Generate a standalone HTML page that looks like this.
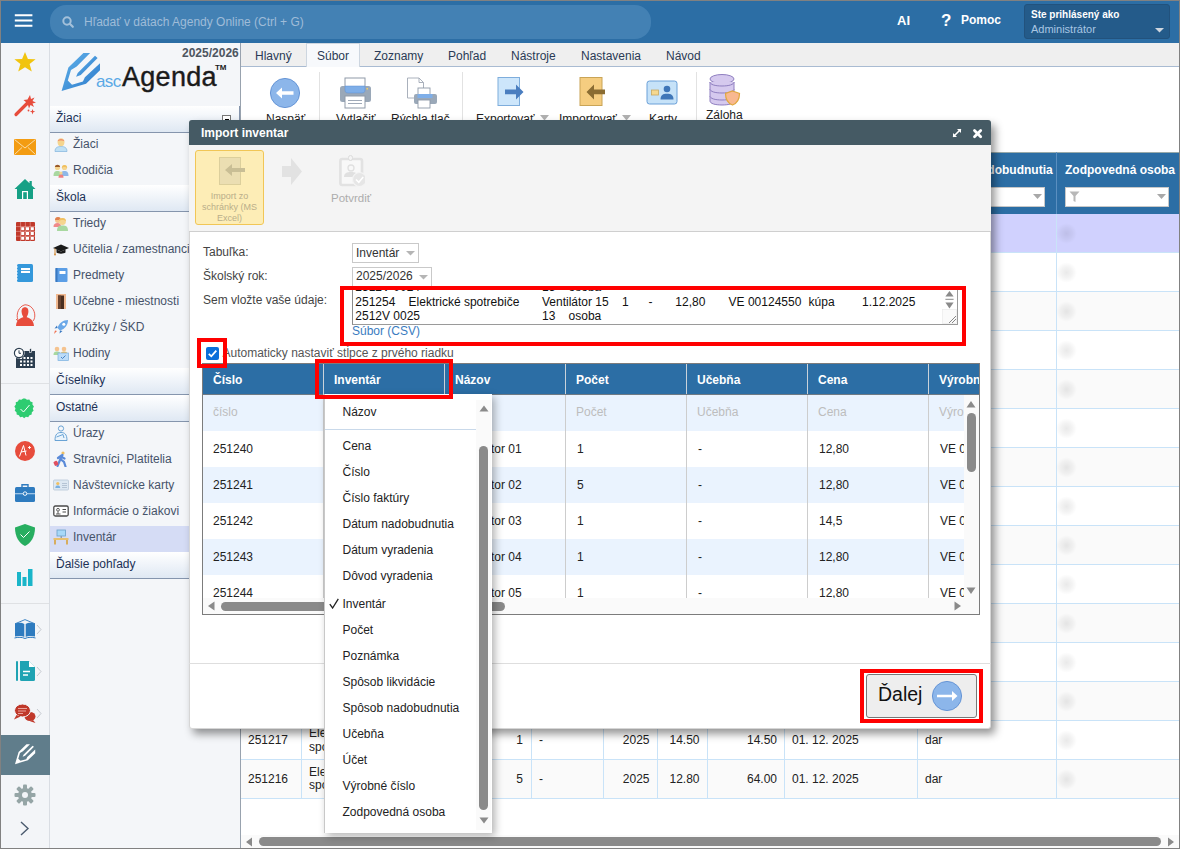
<!DOCTYPE html>
<html><head><meta charset="utf-8">
<style>
*{box-sizing:border-box;margin:0;padding:0}
html,body{width:1180px;height:849px;overflow:hidden;background:#fff}
body{font-family:"Liberation Sans",sans-serif;font-size:12px;position:relative;color:#222}
.a{position:absolute}
.t{position:absolute;white-space:nowrap;line-height:1}
#frame{position:absolute;left:0;top:0;width:1180px;height:849px;border:1px solid #818181;z-index:100;pointer-events:none}
/* header */
#hdr{left:1px;top:1px;width:1178px;height:42px;background:#2c6ea5}
#search{left:49px;top:4px;width:601px;height:34px;border-radius:16px;background:#4381b4}
/* left bar */
#lbar{left:1px;top:43px;width:49px;height:805px;background:#f3f5f8;border-right:1px solid #d9dde3}
/* sidebar */
#side{left:50px;top:43px;width:190px;height:805px;background:#f4f6f9}
.sh{position:absolute;left:0;width:190px;height:27px;background:linear-gradient(#ffffff,#dfe8f3);border-bottom:1px solid #8595ad;color:#1c3156}
.sh span{position:absolute;left:6px;top:6px;font-size:12px;line-height:12px}
.si{position:absolute;left:0;width:190px;height:26px;color:#46536a}
.si span{position:absolute;left:23px;top:5px;font-size:12px;line-height:12px;white-space:nowrap}
.si svg{position:absolute;left:3px;top:3px}
/* main */
#main{left:240px;top:43px;width:939px;height:805px;background:#fff;border-left:1px solid #b8bfc8}
#tabs{left:0;top:0;width:938px;height:24px;background:#efefef;border-bottom:1px solid #a9bbd2}
.tab{position:absolute;top:0;height:24px;color:#2a3b55;font-size:12px}
.tab span{position:absolute;top:7px;line-height:12px;white-space:nowrap}
</style></head><body>
<div id="frame"></div>

<!-- HEADER -->
<div id="hdr" class="a">
<svg class="a" style="left:0;top:0" width="40" height="40"><path d="M13.8 14.2H31.4M13.8 19.5H31.4M13.8 24.8H31.4" stroke="#fff" stroke-width="2"/></svg>
  <div id="search" class="a">
    <svg class="a" style="left:12px;top:11px" width="13" height="13" viewBox="0 0 13 13"><circle cx="5" cy="5" r="3.7" fill="none" stroke="#a3c0da" stroke-width="2"/><line x1="7.8" y1="7.8" x2="10.8" y2="10.8" stroke="#a3c0da" stroke-width="2.2" stroke-linecap="round"/></svg>
    <div class="t" style="left:34px;top:11px;color:#9fbcd8;font-size:12px">Hľadať v dátach Agendy Online (Ctrl + G)</div>
  </div>
  <div class="t" style="left:896px;top:13px;color:#fff;font-weight:bold;font-size:13px">AI</div>
  <div class="t" style="left:940px;top:11px;color:#fff;font-weight:bold;font-size:17px">?</div>
  <div class="t" style="left:960px;top:13px;color:#fff;font-weight:bold;font-size:12px">Pomoc</div>
  <div class="a" style="left:1023px;top:3px;width:146px;height:35px;background:#245b8a;border-radius:3px;border:1px solid #22527d"></div>
  <div class="t" style="left:1030px;top:9px;color:#fff;font-weight:bold;font-size:10px">Ste prihlásený ako</div>
  <div class="t" style="left:1030px;top:23px;color:#a9c6e3;font-size:11px">Administrátor</div>
  <svg class="a" style="left:1154px;top:27px" width="9" height="5"><path d="M0 0H9L4.5 4.5Z" fill="#cfd6de"/></svg>
</div>

<!-- LEFT BAR -->
<div id="lbar" class="a"></div>


<!-- LEFT BAR ICONS -->
<div class="a" style="left:1px;top:383px;width:48px;height:1px;background:#dfe1e4"></div>
<div class="a" style="left:1px;top:603px;width:48px;height:1px;background:#dfe1e4"></div>
<div class="a" style="left:1px;top:735px;width:49px;height:40px;background:#607d8b"></div>
<svg class="a" style="left:13px;top:50px" width="24" height="24" viewBox="0 0 24 24"><path d="M12 2 L14.9 9 L22.6 9.2 L16.6 14 L18.8 21.6 L12 17.3 L5.2 21.6 L7.4 14 L1.4 9.2 L9.1 9Z" fill="#f1c40f"/></svg>
<svg class="a" style="left:13px;top:93px" width="24" height="24" viewBox="0 0 24 24"><path d="M3 21.5 L14.5 10" stroke="#e74c3c" stroke-width="3.2" stroke-linecap="round"/><path d="M17 2 L18 6 L21.5 4.5 L19.5 8 L23 9.5 L19.5 10.5 L21 14 L17.5 12 L16 15.5 L15 12 L11.5 13 L13.5 9.5 L10.5 7 L14.5 6.5Z" fill="#e74c3c"/><path d="M19.5 16 L20.3 18 L22.3 18.5 L20.3 19.2 L19.5 21.5 L18.8 19.2 L16.8 18.5 L18.8 18Z" fill="#e74c3c"/><circle cx="15.5" cy="17.5" r="0.9" fill="#e74c3c"/></svg>
<svg class="a" style="left:13px;top:135px" width="24" height="24" viewBox="0 0 24 24"><rect x="1" y="4" width="22" height="16" fill="#f39c12"/><path d="M1.5 4.5 L12 13 L22.5 4.5 M1.5 19.5 L9 12.5 M22.5 19.5 L15 12.5" stroke="#fbe3b8" stroke-width="0.9" fill="none"/></svg>
<svg class="a" style="left:13px;top:177px" width="24" height="24" viewBox="0 0 24 24"><path d="M1.5 12 L12 2 L16.5 6.2 V4 H18.8 V8.4 L22.5 12 H20 V22 H4 V12Z" fill="#16a085"/><rect x="9" y="14" width="6" height="8" fill="#fff"/><rect x="10.2" y="15.2" width="3.6" height="6.8" fill="#16a085"/></svg>
<svg class="a" style="left:13px;top:219px" width="24" height="24" viewBox="0 0 24 24"><g fill="#c0392b"><rect x="3" y="3" width="19" height="19" rx="1"/></g><g fill="#fff"><rect x="8.2" y="8.2" width="3" height="3"/><rect x="13" y="8.2" width="3" height="3"/><rect x="17.8" y="8.2" width="3" height="3"/><rect x="8.2" y="13" width="3" height="3"/><rect x="13" y="13" width="3" height="3"/><rect x="17.8" y="13" width="3" height="3"/><rect x="8.2" y="17.8" width="3" height="3"/><rect x="13" y="17.8" width="3" height="3"/><rect x="17.8" y="17.8" width="3" height="3"/></g><g stroke="#e8a59e" stroke-width="0.6"><path d="M3 7.6H22M3 12.4H22M3 17.2H22M7.6 3V22M12.4 3V22M17.2 3V22"/></g></svg>
<svg class="a" style="left:13px;top:261px" width="24" height="24" viewBox="0 0 24 24"><rect x="4" y="3" width="16" height="18" rx="1.5" fill="#3498db"/><rect x="8" y="7" width="9" height="5" fill="#fff"/><path d="M8 9.5H17" stroke="#3498db" stroke-width="0.9"/><path d="M3 6H5M3 9H5M3 12H5M3 15H5M3 18H5" stroke="#fff" stroke-width="0.8"/></svg>
<svg class="a" style="left:13px;top:303px" width="24" height="24" viewBox="0 0 24 24"><path d="M12 4.2 C9.3 4.2 8.4 6.5 8.6 9 C8.8 11.5 10 13.3 10.3 14.2 C7.5 15 3.5 16.5 3 23 H21 C20.5 16.5 16.5 15 13.7 14.2 C14 13.3 15.2 11.5 15.4 9 C15.6 6.5 14.7 4.2 12 4.2Z" fill="#e74c3c"/><path d="M5 17 C2.5 11 6 3 12 1.8 C18 1.8 22 7 21.8 13 C21.7 15 21 17 20 18" fill="none" stroke="#e74c3c" stroke-width="0.9"/><path d="M3.2 16 L5 18.3 L6.8 16.6" fill="none" stroke="#e74c3c" stroke-width="0.9"/></svg>
<svg class="a" style="left:12px;top:345px" width="24" height="24" viewBox="0 0 24 24"><rect x="4" y="6" width="19" height="17" fill="#2c3e50"/><rect x="4" y="6" width="19" height="1.2" fill="#fff" opacity="0"/><g fill="#fff"><rect x="8" y="12" width="2" height="2"/><rect x="11.5" y="12" width="2" height="2"/><rect x="15" y="12" width="2" height="2"/><rect x="18.5" y="12" width="2" height="2"/><rect x="8" y="15.5" width="2" height="2"/><rect x="11.5" y="15.5" width="2" height="2"/><rect x="15" y="15.5" width="2" height="2"/><rect x="18.5" y="15.5" width="2" height="2"/><rect x="8" y="19" width="2" height="2"/><rect x="11.5" y="19" width="2" height="2"/><rect x="15" y="19" width="2" height="2"/><rect x="18.5" y="19" width="2" height="2"/></g><rect x="17.5" y="3.5" width="2" height="4" fill="#2c3e50" stroke="#fff" stroke-width="0.6"/><circle cx="7" cy="8" r="5.6" fill="#fff"/><circle cx="7" cy="8" r="4.6" fill="none" stroke="#2c3e50" stroke-width="1.2"/><path d="M7 5.3V8.3H9" stroke="#2c3e50" stroke-width="1" fill="none"/></svg>
<svg class="a" style="left:13px;top:397px" width="24" height="24" viewBox="0 0 24 24"><path d="M12 1.5 L14 2.8 L16.4 2.5 L17.5 4.6 L19.8 5.5 L19.6 7.9 L21.2 9.8 L20 11.9 L20.8 14.2 L19 15.8 L18.8 18.3 L16.5 19 L15.2 21.1 L12.8 20.6 L11 22.2 L9.2 20.6 L6.8 21.1 L5.5 19 L3.2 18.3 L3 15.8 L1.2 14.2 L2 11.9 L0.8 9.8 L2.4 7.9 L2.2 5.5 L4.5 4.6 L5.6 2.5 L8 2.8 L10 1.5Z" fill="#2ecc71" transform="translate(0.6 0) scale(0.96)"/><path d="M7.5 12 L10.5 15 L16.5 8" stroke="#fff" stroke-width="1" fill="none"/></svg>
<svg class="a" style="left:13px;top:439px" width="24" height="24" viewBox="0 0 24 24"><circle cx="12" cy="12" r="10" fill="#e74c3c"/><path d="M6.5 17.5 L10.5 6.5 L13 16.5 M8 13 L13.5 12" stroke="#fff" stroke-width="1" fill="none"/><path d="M15 8.5H18M16.5 7V10" stroke="#fff" stroke-width="0.9"/></svg>
<svg class="a" style="left:13px;top:481px" width="24" height="24" viewBox="0 0 24 24"><rect x="2" y="6" width="20" height="15" rx="1.5" fill="#2e7bbf"/><path d="M9 6V3.8H15V6" fill="none" stroke="#2e7bbf" stroke-width="1.4"/><rect x="2" y="12" width="20" height="1.3" fill="#9cc3e6"/><circle cx="12" cy="12.6" r="1.8" fill="#2e7bbf" stroke="#fff" stroke-width="0.9"/></svg>
<svg class="a" style="left:13px;top:523px" width="24" height="24" viewBox="0 0 24 24"><path d="M12 1 L22 4.5 C22 14 18 20 12 23 C6 20 2 14 2 4.5Z" fill="#27ae60"/><path d="M7.5 11.5 L10.5 14.5 L16.5 8.5" stroke="#fff" stroke-width="1" fill="none"/></svg>
<svg class="a" style="left:13px;top:565px" width="24" height="24" viewBox="0 0 24 24"><g fill="#1ab5c9"><rect x="4" y="7" width="4" height="14"/><rect x="9.5" y="12" width="4" height="9"/><rect x="15" y="4" width="4.5" height="17"/></g></svg>
<svg class="a" style="left:13px;top:617px" width="24" height="24" viewBox="0 0 24 24"><path d="M2 6.8 L12 2.6 L22 6.8" fill="none" stroke="#2e7bbf" stroke-width="0.9"/><path d="M2 6.5 C5 5.5 9 5.5 11.3 7 V20 C9 18.6 5 18.6 2 19.5Z M12.7 7 C15 5.5 19 5.5 22 6.5 V19.5 C19 18.6 15 18.6 12.7 20Z" fill="#2e7bbf"/><path d="M1.5 21 C5 20 9 20 12 21.5 C15 20 19 20 22.5 21" fill="none" stroke="#2e7bbf" stroke-width="1"/></svg>
<svg class="a" style="left:13px;top:659px" width="24" height="24" viewBox="0 0 24 24"><rect x="3" y="2" width="2" height="20" rx="1" fill="#1fa3b3"/><path d="M7 2 H16 L22 8 V20.5 A1.5 1.5 0 0 1 20.5 22 H8.5 A1.5 1.5 0 0 1 7 20.5Z" fill="#1fa3b3"/><path d="M16 2 V8 H22" fill="#fff"/><path d="M16 2.5 V8 H21.5Z" fill="#fff"/><path d="M10 12.5H17M10 16H15" stroke="#fff" stroke-width="1.4"/></svg>
<svg class="a" style="left:13px;top:701px" width="24" height="24" viewBox="0 0 24 24"><ellipse cx="17" cy="15.5" rx="5.5" ry="4.5" fill="#c0392b"/><path d="M20 19 L22.5 22 L17 20.2Z" fill="#c0392b"/><ellipse cx="9.5" cy="9.5" rx="8" ry="6.5" fill="#c0392b" stroke="#f3f5f8" stroke-width="1"/><path d="M3.5 14 L1 18.5 L7.5 15.5Z" fill="#c0392b"/><path d="M5 7.5H14M5 10H13M5 12.5H10" stroke="#e9a49d" stroke-width="1.1"/></svg>
<svg class="a" style="left:36px;top:624px" width="6" height="11"><path d="M1 1 L5 5.5 L1 10" fill="none" stroke="#c3c8ce" stroke-width="1"/></svg>
<svg class="a" style="left:36px;top:666px" width="6" height="11"><path d="M1 1 L5 5.5 L1 10" fill="none" stroke="#c3c8ce" stroke-width="1"/></svg>
<svg class="a" style="left:36px;top:708px" width="6" height="11"><path d="M1 1 L5 5.5 L1 10" fill="none" stroke="#c3c8ce" stroke-width="1"/></svg>
<svg class="a" style="left:12px;top:742px" width="26" height="25" viewBox="0 0 46 44"><g transform="translate(2 1) scale(0.93)"><path d="M25.4 3.1 L32.1 3.1 L18.7 16.6 L13 19.9 L9.8 30.6 L14 34.7 L24.9 31.6 L26.9 27.2 L42 13.2 L42 20.2 L28 33.7 L3.6 40.9 L10.4 17.6Z" fill="#fff"/><path d="M37 5.7 L39.6 8 L22.8 24.9 L18.1 26.7 L19.7 23.1Z" fill="#fff"/></g></svg>
<svg class="a" style="left:13px;top:783px" width="24" height="24" viewBox="0 0 24 24"><g fill="#95a5a6"><circle cx="12" cy="12" r="7"/><rect x="10" y="1.5" width="4" height="5" rx="1"/><rect x="10" y="17.5" width="4" height="5" rx="1"/><rect x="1.5" y="10" width="5" height="4" rx="1"/><rect x="17.5" y="10" width="5" height="4" rx="1"/><rect x="10" y="1.5" width="4" height="5" rx="1" transform="rotate(45 12 12)"/><rect x="10" y="17.5" width="4" height="5" rx="1" transform="rotate(45 12 12)"/><rect x="1.5" y="10" width="5" height="4" rx="1" transform="rotate(45 12 12)"/><rect x="17.5" y="10" width="5" height="4" rx="1" transform="rotate(45 12 12)"/></g><circle cx="12" cy="12" r="3" fill="#f3f5f8"/></svg>
<svg class="a" style="left:19px;top:821px" width="12" height="15"><path d="M2 1 L9 7.5 L2 14" fill="none" stroke="#4a5a6e" stroke-width="1.4"/></svg>

<!-- SIDEBAR -->
<div id="side" class="a"></div>


<!-- SIDEBAR CONTENT -->
<div class="t" style="left:182px;top:47px;color:#4d5560;font-weight:bold;font-size:12px">2025/2026</div>
<svg class="a" style="left:58px;top:50px" width="46" height="44" viewBox="0 0 46 44"><defs><linearGradient id="pg" x1="0" y1="0" x2="1" y2="1"><stop offset="0" stop-color="#62b3ea"/><stop offset="1" stop-color="#2b79cb"/></linearGradient></defs><path d="M25.4 3.1 L32.1 3.1 L18.7 16.6 L13 19.9 L9.8 30.6 L14 34.7 L24.9 31.6 L26.9 27.2 L42 13.2 L42 20.2 L28 33.7 L3.6 40.9 L10.4 17.6Z" fill="url(#pg)"/><path d="M37 5.7 L39.6 8 L22.8 24.9 L18.1 26.7 L19.7 23.1Z" fill="url(#pg)"/></svg>
<div class="t" style="left:96px;top:73px;color:#5aa9e6;font-size:17px;letter-spacing:-0.6px">asc</div>
<div class="t" style="left:122px;top:63.5px;color:#1b1b1b;font-size:27px;letter-spacing:0.3px;-webkit-text-stroke:0.4px #1b1b1b">Agenda</div>
<div class="t" style="left:215px;top:64px;color:#1b1b1b;font-size:8px;font-weight:bold;letter-spacing:-0.2px">TM</div>

<div class="sh" style="left:50px;top:106px"><span>Žiaci</span></div>
<div class="a" style="left:222px;top:115px;width:9px;height:9px;border:1px solid #777;background:#fff"><div class="a" style="left:2px;top:3px;width:4px;height:2px;background:#000"></div></div>
<div class="si" style="left:50px;top:133px"><svg width="16" height="16" viewBox="0 0 16 16"><path d="M2 15.5 C2 11.5 4.5 10.5 8 10.5 C11.5 10.5 14 11.5 14 15.5Z" fill="#bfe0f5" stroke="#7fb3dc" stroke-width="0.7"/><ellipse cx="8" cy="6.3" rx="3.4" ry="4" fill="#f5d58f"/><path d="M4.6 5.5 C4.6 2 11.4 2 11.4 5.5 C10 4.3 6 4.3 4.6 5.5Z" fill="#f08e6b"/></svg><span>Žiaci</span></div>
<div class="si" style="left:50px;top:159px"><svg width="16" height="16" viewBox="0 0 16 16"><path d="M0.5 14 C0.5 10 2 9 4.5 9 C7 9 8 10 8 14Z" fill="#a8d8a0"/><circle cx="4.5" cy="5.5" r="2.6" fill="#f5d58f"/><path d="M1.9 5 C2 2 7 2 7.1 5Z" fill="#9a5a2a"/><path d="M7.5 14 C7.5 10 9 9 11.5 9 C14 9 15.5 10 15.5 14Z" fill="#8fb8e8"/><circle cx="11.5" cy="5.5" r="2.6" fill="#f5d58f"/><path d="M8.9 6 C8.5 2 14.5 2 14.1 6 C13 4.5 10 4.5 8.9 6Z" fill="#f0c060"/><path d="M5.5 15.8 C5.5 13 6.5 12.5 8 12.5 C9.5 12.5 10.5 13 10.5 15.8Z" fill="#f08080"/><circle cx="8" cy="11" r="1.6" fill="#f5d58f"/></svg><span>Rodičia</span></div>

<div class="sh" style="left:50px;top:185px"><span>Škola</span></div>
<div class="si" style="left:50px;top:212px"><svg width="16" height="16" viewBox="0 0 16 16"><path d="M0.5 12 C0.5 9 2 8 4.5 8 C7 8 8 9 8 12Z" fill="#f08a8a"/><circle cx="5" cy="5" r="3" fill="#f5c38f"/><path d="M2 5 C2 1 8 1 8 5Z" fill="#e08050"/><path d="M4 16 C4 11.5 6 10.5 9.5 10.5 C13 10.5 15 11.5 15 16Z" fill="#a8d8a0"/><circle cx="9.5" cy="6.5" r="3.4" fill="#f5d58f"/><path d="M6 6 C6 2 13 2 13 6 C11.5 4.5 7.5 4.5 6 6Z" fill="#f0c060"/></svg><span>Triedy</span></div>
<div class="si" style="left:50px;top:238px"><svg width="16" height="16" viewBox="0 0 16 16"><path d="M0 7 L8 3.5 L16 7 L8 10.5Z" fill="#1a1a1a"/><path d="M3.5 8.5 V11.5 C5 13 11 13 12.5 11.5 V8.5 L8 10.5Z" fill="#1a1a1a"/><path d="M2 7.5 V13" stroke="#d08a3a" stroke-width="1"/><circle cx="2" cy="13.5" r="1" fill="#d08a3a"/></svg><span>Učitelia / zamestnanci</span></div>
<div class="si" style="left:50px;top:264px"><svg width="16" height="16" viewBox="0 0 16 16"><rect x="2.5" y="1" width="12" height="14" rx="1" fill="#5b9ee6"/><rect x="2.5" y="1" width="2" height="14" fill="#3a78c0"/><rect x="6.5" y="4" width="6" height="3" fill="#fff"/></svg><span>Predmety</span></div>
<div class="si" style="left:50px;top:290px"><svg width="16" height="16" viewBox="0 0 16 16"><rect x="3" y="1" width="10" height="15" fill="#f0b890"/><rect x="5" y="2.5" width="6" height="13.5" fill="#4a2e20"/><rect x="5" y="2.5" width="3" height="13.5" fill="#6a4430"/></svg><span>Učebne - miestnosti</span></div>
<div class="si" style="left:50px;top:316px"><svg width="16" height="16" viewBox="0 0 16 16"><path d="M15 1 C10 1 6 4 4.5 9 L7 11.5 C12 10 15 6 15 1Z" fill="#6aa8e8"/><circle cx="10.8" cy="5.2" r="1.5" fill="#fff"/><path d="M4.5 9 L1.5 9.5 L4 6.5 Z M7 11.5 L6.5 14.5 L9.5 12Z" fill="#3a78c0"/><path d="M4 12 L1 15 L2 11.5Z" fill="#f07050"/></svg><span>Krúžky / ŠKD</span></div>
<div class="si" style="left:50px;top:342px"><svg width="16" height="16" viewBox="0 0 16 16"><circle cx="4" cy="4" r="2.3" fill="#f5c38f"/><circle cx="11" cy="4" r="2.3" fill="#f5c38f"/><path d="M0.5 10 C0.5 7 2 6.5 4 6.5 C6 6.5 7.5 7 7.5 10Z" fill="#a8d8a0"/><path d="M7.5 10 C7.5 7 9 6.5 11 6.5 C13 6.5 14.5 7 14.5 10Z" fill="#f0c060"/><rect x="5" y="8" width="10.5" height="7.5" fill="#bcdcf8" stroke="#7ab0e0" stroke-width="0.7"/><path d="M8 12 L9.5 13.5 L12.5 10.5" stroke="#3a78c0" stroke-width="0.9" fill="none"/></svg><span>Hodiny</span></div>
<div class="sh" style="left:50px;top:368px"><span>Číselníky</span></div>
<div class="sh" style="left:50px;top:395px"><span>Ostatné</span></div>
<div class="si" style="left:50px;top:422px"><svg width="16" height="16" viewBox="0 0 16 16"><circle cx="8" cy="3.5" r="2.6" fill="none" stroke="#5a9ad0" stroke-width="0.9"/><path d="M2 15.5 C2 9 4.5 7.5 8 7.5 C11.5 7.5 14 9 14 15.5Z" fill="#eaf4fc" stroke="#5a9ad0" stroke-width="0.9"/><path d="M3.5 12 L10 9.5 L11 13" fill="none" stroke="#5a9ad0" stroke-width="0.9"/></svg><span>Úrazy</span></div>
<div class="si" style="left:50px;top:448px"><svg width="16" height="16" viewBox="0 0 16 16"><circle cx="10" cy="2" r="1.6" fill="#f0c060"/><path d="M9.5 4 L7 9 L4.5 15 M8 8.5 L11 11 L12.5 15.5 M7.5 5.5 L11.5 7.5 M8.5 4.5 L5 7" stroke="#5a8ad8" stroke-width="2.2" stroke-linecap="round" fill="none"/><rect x="0.8" y="10" width="4" height="4.5" rx="1" transform="rotate(-25 3 12)" fill="#e05060"/></svg><span>Stravníci, Platitelia</span></div>
<div class="si" style="left:50px;top:474px"><svg width="16" height="16" viewBox="0 0 16 16"><rect x="0.5" y="3" width="15" height="10" rx="1" fill="#dde8f2" stroke="#b8c8d8" stroke-width="0.8"/><circle cx="4.8" cy="6.5" r="1.6" fill="#f0c060"/><path d="M2.3 11 C2.3 8.8 3.5 8.5 4.8 8.5 C6 8.5 7.2 8.8 7.2 11Z" fill="#7ab0e0"/><path d="M9 6.5H14M9 8.5H14M9 10.5H14" stroke="#b0c0d0" stroke-width="0.9"/></svg><span>Návštevnícke karty</span></div>
<div class="si" style="left:50px;top:500px"><svg width="16" height="16" viewBox="0 0 16 16"><rect x="0.8" y="3" width="14.4" height="10" rx="1.5" fill="#fff" stroke="#4a4a4a" stroke-width="1.3"/><circle cx="5" cy="6.8" r="1.4" fill="none" stroke="#4a4a4a" stroke-width="0.9"/><path d="M3 11H7.5 M5 8.5V11" stroke="#4a4a4a" stroke-width="0.9"/><path d="M9.5 6.5H13M9.5 9H13" stroke="#4a4a4a" stroke-width="1"/></svg><span>Informácie o žiakovi</span></div>
<div class="si" style="left:50px;top:526px;background:#d5dcf5"><svg width="16" height="16" viewBox="0 0 16 16"><rect x="4" y="1" width="8.5" height="6" fill="#a8d8f8" stroke="#6aa0c8" stroke-width="0.8"/><rect x="7.5" y="7" width="1.5" height="2" fill="#90a0b0"/><rect x="0.5" y="9" width="15" height="2" fill="#e8c070"/><path d="M2 11 V15.5 M14 11 V15.5" stroke="#d8a850" stroke-width="1.8"/></svg><span>Inventár</span></div>
<div class="sh" style="left:50px;top:552px"><span>Ďalšie pohľady</span></div>

<!-- MAIN -->
<div class="a" style="left:240px;top:43px;width:939px;height:805px;background:#fff;border-left:1px solid #98a2ae"></div>
<div class="a" style="left:239px;top:106px;width:1px;height:27px;background:#8595ad"></div>
<div class="a" style="left:241px;top:43px;width:938px;height:24px;background:#efefef;border-bottom:1px solid #a9bbd2"></div>
<div class="a" style="left:306px;top:43px;width:54px;height:24px;background:#f7f9fc;border:1px solid #cdd6e0;border-bottom:none"></div>
<div class="t" style="left:255px;top:50px;color:#2a3a55">Hlavný</div>
<div class="t" style="left:317px;top:50px;color:#2a3a55">Súbor</div>
<div class="t" style="left:374px;top:50px;color:#2a3a55">Zoznamy</div>
<div class="t" style="left:448px;top:50px;color:#2a3a55">Pohľad</div>
<div class="t" style="left:511px;top:50px;color:#2a3a55">Nástroje</div>
<div class="t" style="left:581px;top:50px;color:#2a3a55">Nastavenia</div>
<div class="t" style="left:666px;top:50px;color:#2a3a55">Návod</div>

<!-- toolbar -->
<div class="a" style="left:319px;top:72px;width:1px;height:60px;background:#e2e2e2"></div>
<div class="a" style="left:462px;top:72px;width:1px;height:60px;background:#e2e2e2"></div>
<div class="a" style="left:696px;top:72px;width:1px;height:60px;background:#e2e2e2"></div>
<svg class="a" style="left:269px;top:77px" width="32" height="32" viewBox="0 0 32 32"><circle cx="16" cy="16" r="14.6" fill="#8cb6ea" stroke="#5d8fd2" stroke-width="0.9"/><path d="M7 16 L13 10.5 V14.2 H24.5 V17.8 H13 V21.5Z" fill="#fff"/></svg>
<svg class="a" style="left:339px;top:77px" width="33" height="32" viewBox="0 0 33 32"><rect x="6" y="1" width="20" height="10" fill="#fff" stroke="#8f9aa8" stroke-width="1"/><rect x="1" y="9" width="31" height="16" rx="2.5" fill="#9aa8b8"/><path d="M6 9 H26 V13 C26 15 25 16 23 16 H9 C7 16 6 15 6 13Z" fill="#7eaee8" stroke="#5d8fd2" stroke-width="0.5"/><rect x="27.5" y="11" width="1.5" height="1.5" fill="#f5d060"/><rect x="6" y="19" width="20" height="12" fill="#fff" stroke="#8f9aa8" stroke-width="1"/><path d="M9 23.5 H23 M9 26.5 H23" stroke="#a0aab8" stroke-width="1"/></svg>
<svg class="a" style="left:406px;top:77px" width="31" height="32" viewBox="0 0 31 32"><path d="M1.5 1 H13 L17.5 5.5 V21 H1.5Z" fill="#fff" stroke="#a0a8b4" stroke-width="0.9"/><path d="M13 1 V5.5 H17.5" fill="none" stroke="#a0a8b4" stroke-width="0.9"/><rect x="12" y="11" width="12" height="8" fill="#fff" stroke="#8f9aa8" stroke-width="0.9"/><rect x="8" y="17" width="23" height="10" rx="2" fill="#9aa8b8"/><rect x="11.5" y="17" width="15" height="4" fill="#7eaee8"/><rect x="12" y="23" width="12" height="8" fill="#fff" stroke="#8f9aa8" stroke-width="0.9"/></svg>
<svg class="a" style="left:497px;top:76px" width="28" height="31" viewBox="0 0 28 31"><rect x="1" y="1.5" width="21.5" height="28" fill="#cde6fb" stroke="#7eaddc" stroke-width="1"/><path d="M8 13.6 H19 V8.5 L26.5 16 L19 23.5 V18.2 H8Z" fill="#4a7ec0"/></svg>
<svg class="a" style="left:579px;top:76px" width="28" height="31" viewBox="0 0 28 31"><rect x="1" y="1.5" width="22" height="28" fill="#f5cd80" stroke="#c9a456" stroke-width="1"/><path d="M26 13.6 H15 V8.5 L7.5 16 L15 23.5 V18.2 H26Z" fill="#8a6c32"/></svg>
<svg class="a" style="left:646px;top:80px" width="32" height="26" viewBox="0 0 32 26"><rect x="1" y="1" width="30" height="23" rx="2.5" fill="#c6e2f8" stroke="#6aa0d8" stroke-width="1"/><rect x="5.5" y="10" width="7" height="5" fill="#f5d890" stroke="#c8a860" stroke-width="0.8"/><circle cx="21" cy="9" r="3.3" fill="#3f76b8"/><path d="M14.5 19.5 C14.5 15 17 13.8 21 13.8 C25 13.8 27.5 15 27.5 19.5Z" fill="#3f76b8"/></svg>
<svg class="a" style="left:708px;top:73px" width="33" height="33" viewBox="0 0 33 33"><g fill="#d5c9ee" stroke="#8f7fc0" stroke-width="1"><path d="M2 23 V28 C2 30.5 7 32 14 32 C21 32 26 30.5 26 28 V23"/><path d="M2 16 V23 C2 25.5 7 27 14 27 C21 27 26 25.5 26 23 V16"/><path d="M2 9 V16 C2 18.5 7 20 14 20 C21 20 26 18.5 26 16 V9"/><ellipse cx="14" cy="6" rx="12" ry="4.5"/></g><path d="M2 9 C2 11.5 7 13 14 13 C21 13 26 11.5 26 9" fill="#d5c9ee" stroke="#8f7fc0" stroke-width="1"/><path d="M24.5 18 L31.5 20.5 C31.5 27 28.5 30.5 24.5 32 C20.5 30.5 17.5 27 17.5 20.5Z" fill="#f8b890" stroke="#e0a840" stroke-width="1.2"/></svg>
<div class="t" style="left:266px;top:113px;color:#222">Naspäť</div>
<div class="t" style="left:336px;top:113px;color:#222">Vytlačiť</div>
<div class="t" style="left:391px;top:113px;color:#222">Rýchla tlač</div>
<div class="t" style="left:476px;top:113px;color:#222">Exportovať</div>
<svg class="a" style="left:540px;top:115px" width="9" height="6"><path d="M0 0H9L4.5 5.5Z" fill="#b0b0b0"/></svg>
<div class="t" style="left:559px;top:113px;color:#222">Importovať</div>
<svg class="a" style="left:622px;top:115px" width="9" height="6"><path d="M0 0H9L4.5 5.5Z" fill="#b0b0b0"/></svg>
<div class="t" style="left:649px;top:113px;color:#222">Karty</div>
<div class="t" style="left:706px;top:109px;color:#222">Záloha</div>

<!-- background table -->
<div class="a" style="left:241px;top:152px;width:938px;height:62px;background:#2c6ea5;border-top:1px solid #9aa"></div>
<div class="a" style="left:1056px;top:152px;width:1px;height:62px;background:#5a8fc0"></div>
<div class="t" style="left:926px;top:163.6px;color:#fff;font-weight:bold">Spôsob nadobudnutia</div>
<div class="t" style="left:1065px;top:163.6px;color:#fff;font-weight:bold">Zodpovedná osoba</div>
<div class="a" style="left:925px;top:187px;width:120px;height:20px;background:#fff;border:1px solid #c8c8c8"></div>
<svg class="a" style="left:1033px;top:194px" width="9" height="6"><path d="M0 0H9L4.5 5Z" fill="#a8a8a8"/></svg>
<div class="a" style="left:1065px;top:187px;width:104px;height:20px;background:#fff;border:1px solid #c8c8c8"></div>
<svg class="a" style="left:1069px;top:191px" width="11" height="12"><path d="M0.5 0.5H10.5L6.5 5V11L4.5 10V5Z" fill="#b8b8b8"/></svg>
<svg class="a" style="left:1157px;top:194px" width="9" height="6"><path d="M0 0H9L4.5 5Z" fill="#a8a8a8"/></svg>
<div class="a" style="left:241px;top:214px;width:938px;height:39px;background:#d0d1fe;border-bottom:1px solid #c9e3f8"></div>
<div class="a" style="left:1056px;top:214px;width:1px;height:39px;background:#c9e3f8"></div>
<div class="a" style="left:1056px;top:223px;width:21px;height:21px;border-radius:50%;background:radial-gradient(circle,rgba(0,0,0,.085),rgba(0,0,0,.045) 40%,rgba(0,0,0,0) 70%)"></div>
<div class="a" style="left:241px;top:253px;width:938px;height:39px;background:#ffffff;border-bottom:1px solid #c9e3f8"></div>
<div class="a" style="left:1056px;top:253px;width:1px;height:39px;background:#c9e3f8"></div>
<div class="a" style="left:1056px;top:262px;width:21px;height:21px;border-radius:50%;background:radial-gradient(circle,rgba(0,0,0,.085),rgba(0,0,0,.045) 40%,rgba(0,0,0,0) 70%)"></div>
<div class="a" style="left:241px;top:292px;width:938px;height:39px;background:#fafafa;border-bottom:1px solid #c9e3f8"></div>
<div class="a" style="left:1056px;top:292px;width:1px;height:39px;background:#c9e3f8"></div>
<div class="a" style="left:1056px;top:301px;width:21px;height:21px;border-radius:50%;background:radial-gradient(circle,rgba(0,0,0,.085),rgba(0,0,0,.045) 40%,rgba(0,0,0,0) 70%)"></div>
<div class="a" style="left:241px;top:331px;width:938px;height:39px;background:#ffffff;border-bottom:1px solid #c9e3f8"></div>
<div class="a" style="left:1056px;top:331px;width:1px;height:39px;background:#c9e3f8"></div>
<div class="a" style="left:1056px;top:340px;width:21px;height:21px;border-radius:50%;background:radial-gradient(circle,rgba(0,0,0,.085),rgba(0,0,0,.045) 40%,rgba(0,0,0,0) 70%)"></div>
<div class="a" style="left:241px;top:370px;width:938px;height:39px;background:#fafafa;border-bottom:1px solid #c9e3f8"></div>
<div class="a" style="left:1056px;top:370px;width:1px;height:39px;background:#c9e3f8"></div>
<div class="a" style="left:1056px;top:379px;width:21px;height:21px;border-radius:50%;background:radial-gradient(circle,rgba(0,0,0,.085),rgba(0,0,0,.045) 40%,rgba(0,0,0,0) 70%)"></div>
<div class="a" style="left:241px;top:409px;width:938px;height:39px;background:#ffffff;border-bottom:1px solid #c9e3f8"></div>
<div class="a" style="left:1056px;top:409px;width:1px;height:39px;background:#c9e3f8"></div>
<div class="a" style="left:1056px;top:418px;width:21px;height:21px;border-radius:50%;background:radial-gradient(circle,rgba(0,0,0,.085),rgba(0,0,0,.045) 40%,rgba(0,0,0,0) 70%)"></div>
<div class="a" style="left:241px;top:448px;width:938px;height:39px;background:#fafafa;border-bottom:1px solid #c9e3f8"></div>
<div class="a" style="left:1056px;top:448px;width:1px;height:39px;background:#c9e3f8"></div>
<div class="a" style="left:1056px;top:457px;width:21px;height:21px;border-radius:50%;background:radial-gradient(circle,rgba(0,0,0,.085),rgba(0,0,0,.045) 40%,rgba(0,0,0,0) 70%)"></div>
<div class="a" style="left:241px;top:487px;width:938px;height:39px;background:#ffffff;border-bottom:1px solid #c9e3f8"></div>
<div class="a" style="left:1056px;top:487px;width:1px;height:39px;background:#c9e3f8"></div>
<div class="a" style="left:1056px;top:496px;width:21px;height:21px;border-radius:50%;background:radial-gradient(circle,rgba(0,0,0,.085),rgba(0,0,0,.045) 40%,rgba(0,0,0,0) 70%)"></div>
<div class="a" style="left:241px;top:526px;width:938px;height:39px;background:#fafafa;border-bottom:1px solid #c9e3f8"></div>
<div class="a" style="left:1056px;top:526px;width:1px;height:39px;background:#c9e3f8"></div>
<div class="a" style="left:1056px;top:535px;width:21px;height:21px;border-radius:50%;background:radial-gradient(circle,rgba(0,0,0,.085),rgba(0,0,0,.045) 40%,rgba(0,0,0,0) 70%)"></div>
<div class="a" style="left:241px;top:565px;width:938px;height:39px;background:#ffffff;border-bottom:1px solid #c9e3f8"></div>
<div class="a" style="left:1056px;top:565px;width:1px;height:39px;background:#c9e3f8"></div>
<div class="a" style="left:1056px;top:574px;width:21px;height:21px;border-radius:50%;background:radial-gradient(circle,rgba(0,0,0,.085),rgba(0,0,0,.045) 40%,rgba(0,0,0,0) 70%)"></div>
<div class="a" style="left:241px;top:604px;width:938px;height:39px;background:#fafafa;border-bottom:1px solid #c9e3f8"></div>
<div class="a" style="left:1056px;top:604px;width:1px;height:39px;background:#c9e3f8"></div>
<div class="a" style="left:1056px;top:613px;width:21px;height:21px;border-radius:50%;background:radial-gradient(circle,rgba(0,0,0,.085),rgba(0,0,0,.045) 40%,rgba(0,0,0,0) 70%)"></div>
<div class="a" style="left:241px;top:643px;width:938px;height:39px;background:#ffffff;border-bottom:1px solid #c9e3f8"></div>
<div class="a" style="left:1056px;top:643px;width:1px;height:39px;background:#c9e3f8"></div>
<div class="a" style="left:1056px;top:652px;width:21px;height:21px;border-radius:50%;background:radial-gradient(circle,rgba(0,0,0,.085),rgba(0,0,0,.045) 40%,rgba(0,0,0,0) 70%)"></div>
<div class="a" style="left:241px;top:682px;width:938px;height:39px;background:#fafafa;border-bottom:1px solid #c9e3f8"></div>
<div class="a" style="left:1056px;top:682px;width:1px;height:39px;background:#c9e3f8"></div>
<div class="a" style="left:1056px;top:691px;width:21px;height:21px;border-radius:50%;background:radial-gradient(circle,rgba(0,0,0,.085),rgba(0,0,0,.045) 40%,rgba(0,0,0,0) 70%)"></div>
<div class="a" style="left:241px;top:721px;width:938px;height:39px;background:#ffffff;border-bottom:1px solid #c9e3f8"></div>
<div class="a" style="left:1056px;top:721px;width:1px;height:39px;background:#c9e3f8"></div>
<div class="a" style="left:1056px;top:730px;width:21px;height:21px;border-radius:50%;background:radial-gradient(circle,rgba(0,0,0,.085),rgba(0,0,0,.045) 40%,rgba(0,0,0,0) 70%)"></div>
<div class="a" style="left:241px;top:760px;width:938px;height:39px;background:#fafafa;border-bottom:1px solid #c9e3f8"></div>
<div class="a" style="left:1056px;top:760px;width:1px;height:39px;background:#c9e3f8"></div>
<div class="a" style="left:1056px;top:769px;width:21px;height:21px;border-radius:50%;background:radial-gradient(circle,rgba(0,0,0,.085),rgba(0,0,0,.045) 40%,rgba(0,0,0,0) 70%)"></div>
<div class="a" style="left:301px;top:214px;width:1px;height:585px;background:#c9e3f8"></div>
<div class="a" style="left:491px;top:214px;width:1px;height:585px;background:#c9e3f8"></div>
<div class="a" style="left:531px;top:214px;width:1px;height:585px;background:#c9e3f8"></div>
<div class="a" style="left:603px;top:214px;width:1px;height:585px;background:#c9e3f8"></div>
<div class="a" style="left:657px;top:214px;width:1px;height:585px;background:#c9e3f8"></div>
<div class="a" style="left:707px;top:214px;width:1px;height:585px;background:#c9e3f8"></div>
<div class="a" style="left:784px;top:214px;width:1px;height:585px;background:#c9e3f8"></div>
<div class="a" style="left:917px;top:214px;width:1px;height:585px;background:#c9e3f8"></div>
<div class="t" style="left:248px;top:733.8px;font-size:12px;color:#222;">251217</div>
<div class="t" style="left:309px;top:727.0px;font-size:12px;color:#222;">Elektrické</div>
<div class="t" style="left:309px;top:740.6px;font-size:12px;color:#222;">spotrebiče</div>
<div class="t" style="left:423px;width:100px;text-align:right;top:733.8px;color:#222">1</div>
<div class="t" style="left:539px;top:733.8px;font-size:12px;color:#222;">-</div>
<div class="t" style="left:549.5px;width:100px;text-align:right;top:733.8px;color:#222">2025</div>
<div class="t" style="left:599.5px;width:100px;text-align:right;top:733.8px;color:#222">14.50</div>
<div class="t" style="left:677px;width:100px;text-align:right;top:733.8px;color:#222">14.50</div>
<div class="t" style="left:792px;top:733.8px;font-size:12px;color:#222;">01. 12. 2025</div>
<div class="t" style="left:925px;top:733.8px;font-size:12px;color:#222;">dar</div>
<div class="t" style="left:248px;top:772.6px;font-size:12px;color:#222;">251216</div>
<div class="t" style="left:309px;top:765.8px;font-size:12px;color:#222;">Elektrické</div>
<div class="t" style="left:309px;top:779.4px;font-size:12px;color:#222;">spotrebiče</div>
<div class="t" style="left:423px;width:100px;text-align:right;top:772.6px;color:#222">5</div>
<div class="t" style="left:539px;top:772.6px;font-size:12px;color:#222;">-</div>
<div class="t" style="left:549.5px;width:100px;text-align:right;top:772.6px;color:#222">2025</div>
<div class="t" style="left:599.5px;width:100px;text-align:right;top:772.6px;color:#222">12.80</div>
<div class="t" style="left:677px;width:100px;text-align:right;top:772.6px;color:#222">64.00</div>
<div class="t" style="left:792px;top:772.6px;font-size:12px;color:#222;">01. 12. 2025</div>
<div class="t" style="left:925px;top:772.6px;font-size:12px;color:#222;">dar</div>
<!-- bottom h-scrollbar -->
<div class="a" style="left:241px;top:835px;width:938px;height:13px;background:#fafafa"></div>
<svg class="a" style="left:245px;top:837px" width="8" height="10"><path d="M7 0.5V9.5L1 5Z" fill="#8a8a8a"/></svg>
<div class="a" style="left:259px;top:837px;width:902px;height:9px;border-radius:4.5px;background:#8a8a8a"></div>
<svg class="a" style="left:1167px;top:837px" width="8" height="10"><path d="M1 0.5V9.5L7 5Z" fill="#8a8a8a"/></svg>

<!-- DIALOG -->
<div class="a" style="left:189px;top:120px;width:802px;height:609px;background:#fff;border-radius:3px;border:1px solid #d6d6d6;box-shadow:4px 5px 9px rgba(0,0,0,.42);overflow:hidden">
</div>
<div class="a" style="left:189px;top:120px;width:802px;height:25px;background:#455a64;border-radius:3px 3px 0 0"></div>
<div class="t" style="left:201px;top:126.8px;font-size:12px;color:#fff;font-weight:bold;">Import inventar</div>
<svg class="a" style="left:952px;top:128px" width="10" height="10" viewBox="0 0 10 10"><path d="M1.2 8.8 L8.8 1.2" stroke="#fff" stroke-width="1.6"/><path d="M5 1 H9 V5Z M1 5 V9 H5Z" fill="#fff"/></svg>
<svg class="a" style="left:972px;top:128px" width="11" height="11" viewBox="0 0 11 11"><path d="M2.5 2.5 L8.7 8.7 M8.7 2.5 L2.5 8.7" stroke="#fff" stroke-width="2.8" stroke-linecap="round"/></svg>
<div class="a" style="left:189px;top:145px;width:802px;height:87px;background:#f4f4f4;border-bottom:1px solid #cfcfcf"></div>
<div class="a" style="left:195px;top:150px;width:69px;height:75px;background:#fdedb6;border:1px solid #f1c656;border-radius:3px"></div>
<svg class="a" style="left:218px;top:156px" width="28" height="30" viewBox="0 0 28 30"><rect x="1.5" y="1.5" width="21" height="27" fill="#ebdeb2" stroke="#dccf9c" stroke-width="1"/><path d="M27 12 H14 V8 L7 14 L14 20 V16 H27Z" fill="#c9be95"/></svg>
<div class="t" style="left:195px;width:69px;text-align:center;top:191.6px;font-size:9px;color:#b9ae8a">Import zo</div>
<div class="t" style="left:195px;width:69px;text-align:center;top:202.6px;font-size:9px;color:#b9ae8a">schránky (MS</div>
<div class="t" style="left:195px;width:69px;text-align:center;top:213.6px;font-size:9px;color:#b9ae8a">Excel)</div>
<svg class="a" style="left:281px;top:157px" width="22" height="29" viewBox="0 0 22 29"><path d="M1 9 H10 V1 L21 14.5 L10 28 V20 H1Z" fill="#e2e2e2"/></svg>
<svg class="a" style="left:338px;top:155px" width="27" height="33" viewBox="0 0 27 33"><rect x="2.4" y="4" width="21.6" height="26" rx="2" fill="#f8f8f8" stroke="#e2e2e2" stroke-width="2.6"/><rect x="10.5" y="0.5" width="4" height="5" rx="2" fill="#f4f4f4" stroke="#dcdcdc" stroke-width="1"/><circle cx="13" cy="13" r="3" fill="none" stroke="#e0e0e0" stroke-width="1.3"/><path d="M6 22 C6 18 9 17 13 17 C17 17 20 18 20 22Z" fill="#e0e0e0"/><circle cx="21.5" cy="24.5" r="7" fill="#e6e6e6" stroke="#f4f4f4" stroke-width="1.2"/><path d="M18 24.5 L20.8 27.3 L25.2 22" stroke="#fff" stroke-width="1.6" fill="none"/></svg>
<div class="t" style="left:331px;top:193.1px;font-size:11.5px;color:#adadad;font-weight:normal;">Potvrdiť</div>
<div class="t" style="left:203px;top:245.8px;font-size:12px;color:#444;font-weight:normal;">Tabuľka:</div>
<div class="t" style="left:203px;top:269.5px;font-size:12px;color:#444;font-weight:normal;">Školský rok:</div>
<div class="t" style="left:203px;top:294.3px;font-size:12px;color:#444;font-weight:normal;">Sem vložte vaše údaje:</div>
<div class="a" style="left:352px;top:243px;width:67px;height:20px;border:1px solid #c9c9c9;background:#fff"></div>
<div class="t" style="left:356px;top:246.5px;font-size:12px;color:#333;font-weight:normal;">Inventár</div>
<svg class="a" style="left:406px;top:251px" width="9" height="5"><path d="M0 0H9L4.5 4.5Z" fill="#b5b5b5"/></svg>
<div class="a" style="left:352px;top:267px;width:80px;height:21px;border:1px solid #c9c9c9;background:#fff"></div>
<div class="t" style="left:356px;top:270.2px;font-size:12px;color:#333;font-weight:normal;">2025/2026</div>
<svg class="a" style="left:419px;top:275px" width="9" height="5"><path d="M0 0H9L4.5 4.5Z" fill="#b5b5b5"/></svg>
<div class="a" style="left:352px;top:287px;width:606px;height:38px;border:1px solid #9a9a9a;border-top-color:#767676;border-left-color:#8a8a8a;background:#fff;overflow:hidden">
<div class="t" style="left:2.3px;top:-6.6px;color:#111">2512V 0024</div>
<div class="t" style="left:189.0px;top:-6.6px;color:#111">13</div>
<div class="t" style="left:215.6px;top:-6.6px;color:#111">osoba</div>
<div class="t" style="left:2.3px;top:7.5px;color:#111">251254</div>
<div class="t" style="left:55.6px;top:7.5px;color:#111">Elektrické spotrebiče</div>
<div class="t" style="left:189.0px;top:7.5px;color:#111">Ventilátor 15</div>
<div class="t" style="left:269.0px;top:7.5px;color:#111">1</div>
<div class="t" style="left:295.6px;top:7.5px;color:#111">-</div>
<div class="t" style="left:322.3px;top:7.5px;color:#111">12,80</div>
<div class="t" style="left:375.6px;top:7.5px;color:#111">VE 00124550</div>
<div class="t" style="left:455.6px;top:7.5px;color:#111">kúpa</div>
<div class="t" style="left:509.0px;top:7.5px;color:#111">1.12.2025</div>
<div class="t" style="left:2.3px;top:21.6px;color:#111">2512V 0025</div>
<div class="t" style="left:189.0px;top:21.6px;color:#111">13</div>
<div class="t" style="left:215.6px;top:21.6px;color:#111">osoba</div>
</div>
<svg class="a" style="left:941px;top:290px" width="16" height="34" viewBox="0 0 16 34"><rect x="3" y="0" width="13" height="19" fill="#fff"/><path d="M4.4 6.5 L8.5 1 L12.6 6.5Z" fill="#8a8a8a"/><path d="M4.4 9.3H12.6" stroke="#8a8a8a" stroke-width="1"/><path d="M4.4 12.5 H12.6 L8.5 18.6Z" fill="#8a8a8a"/><rect x="1.5" y="19.5" width="14" height="14" fill="#fafafa" stroke="#e8e8e8" stroke-width="0.6"/><path d="M8 33 L15 26 M11 33 L15 29" stroke="#555" stroke-width="0.7"/></svg>
<div class="t" style="left:352px;top:325.1px;font-size:12px;color:#3a7cbf;font-weight:normal;">Súbor (CSV)</div>
<div class="a" style="left:340px;top:286px;width:626px;height:60px;border:4px solid #f00;z-index:50"></div>
<div class="a" style="left:206px;top:347px;width:13px;height:13px;border-radius:2px;background:#0b6fd9"></div>
<svg class="a" style="left:206px;top:347px" width="13" height="13" viewBox="0 0 13 13"><path d="M2.8 6.8 L5.3 9.3 L10.3 3.6" stroke="#fff" stroke-width="1.8" fill="none"/></svg>
<div class="t" style="left:222.5px;top:347.3px;font-size:12px;color:#555;font-weight:normal;">Automaticky nastaviť stĺpce z prvého riadku</div>
<div class="a" style="left:197px;top:338px;width:30px;height:30px;border:4px solid #f00;z-index:50"></div>
<div class="a" style="left:202px;top:363px;width:778px;height:252px;border:1px solid #7c7c7c;background:#fff;overflow:hidden">
<div class="a" style="left:0px;top:0px;width:776px;height:30px;background:#2c6ea5"></div>
<div class="a" style="left:0px;top:30px;width:776px;height:1px;background:#6f7a84"></div>
<div class="t" style="left:10.0px;top:9.5px;color:#fff;font-weight:bold">Číslo</div>
<div class="a" style="left:120px;top:0px;width:1px;height:30px;background:#c9d2da"></div>
<div class="t" style="left:131.0px;top:9.5px;color:#fff;font-weight:bold">Inventár</div>
<div class="a" style="left:241px;top:0px;width:1px;height:30px;background:#c9d2da"></div>
<div class="t" style="left:252.0px;top:9.5px;color:#fff;font-weight:bold">Názov</div>
<div class="a" style="left:362px;top:0px;width:1px;height:30px;background:#c9d2da"></div>
<div class="t" style="left:373.0px;top:9.5px;color:#fff;font-weight:bold">Počet</div>
<div class="a" style="left:483px;top:0px;width:1px;height:30px;background:#c9d2da"></div>
<div class="t" style="left:494.0px;top:9.5px;color:#fff;font-weight:bold">Učebňa</div>
<div class="a" style="left:604px;top:0px;width:1px;height:30px;background:#c9d2da"></div>
<div class="t" style="left:615.0px;top:9.5px;color:#fff;font-weight:bold">Cena</div>
<div class="a" style="left:725px;top:0px;width:1px;height:30px;background:#c9d2da"></div>
<div class="t" style="left:736.0px;top:9.5px;color:#fff;font-weight:bold">Výrobné číslo</div>
<div class="a" style="left:0px;top:31px;width:776px;height:36px;background:#eaf3fe"></div>
<div class="a" style="left:0px;top:67px;width:776px;height:36px;background:#fff"></div>
<div class="a" style="left:0px;top:103px;width:776px;height:36px;background:#eaf3fe"></div>
<div class="a" style="left:0px;top:139px;width:776px;height:36px;background:#fff"></div>
<div class="a" style="left:0px;top:175px;width:776px;height:36px;background:#eaf3fe"></div>
<div class="a" style="left:0px;top:211px;width:776px;height:36px;background:#fff"></div>
<div class="a" style="left:120px;top:31px;width:1px;height:220px;background:#cdcdcd"></div>
<div class="a" style="left:241px;top:31px;width:1px;height:220px;background:#cdcdcd"></div>
<div class="a" style="left:362px;top:31px;width:1px;height:220px;background:#cdcdcd"></div>
<div class="a" style="left:483px;top:31px;width:1px;height:220px;background:#cdcdcd"></div>
<div class="a" style="left:604px;top:31px;width:1px;height:220px;background:#cdcdcd"></div>
<div class="a" style="left:725px;top:31px;width:1px;height:220px;background:#cdcdcd"></div>
<div class="t" style="left:10.0px;top:42.2px;color:#bdbdbd;font-weight:normal">číslo</div>
<div class="t" style="left:373.0px;top:42.2px;color:#bdbdbd;font-weight:normal">Počet</div>
<div class="t" style="left:494.0px;top:42.2px;color:#bdbdbd;font-weight:normal">Učebňa</div>
<div class="t" style="left:615.0px;top:42.2px;color:#bdbdbd;font-weight:normal">Cena</div>
<div class="t" style="left:736.0px;top:42.2px;color:#bdbdbd;font-weight:normal">Výrobné</div>
<div class="t" style="left:10.0px;top:78.6px;color:#222;font-weight:normal">251240</div>
<div class="t" style="left:252.0px;top:78.6px;color:#222;font-weight:normal">Ventilátor 01</div>
<div class="t" style="left:374.0px;top:78.6px;color:#222;font-weight:normal">1</div>
<div class="t" style="left:495.0px;top:78.6px;color:#222;font-weight:normal">-</div>
<div class="t" style="left:616.0px;top:78.6px;color:#222;font-weight:normal">12,80</div>
<div class="t" style="left:737.0px;top:78.6px;color:#222;font-weight:normal">VE 00124550</div>
<div class="t" style="left:10.0px;top:114.6px;color:#222;font-weight:normal">251241</div>
<div class="t" style="left:252.0px;top:114.6px;color:#222;font-weight:normal">Ventilátor 02</div>
<div class="t" style="left:374.0px;top:114.6px;color:#222;font-weight:normal">5</div>
<div class="t" style="left:495.0px;top:114.6px;color:#222;font-weight:normal">-</div>
<div class="t" style="left:616.0px;top:114.6px;color:#222;font-weight:normal">12,80</div>
<div class="t" style="left:737.0px;top:114.6px;color:#222;font-weight:normal">VE 00124550</div>
<div class="t" style="left:10.0px;top:150.6px;color:#222;font-weight:normal">251242</div>
<div class="t" style="left:252.0px;top:150.6px;color:#222;font-weight:normal">Ventilátor 03</div>
<div class="t" style="left:374.0px;top:150.6px;color:#222;font-weight:normal">1</div>
<div class="t" style="left:495.0px;top:150.6px;color:#222;font-weight:normal">-</div>
<div class="t" style="left:616.0px;top:150.6px;color:#222;font-weight:normal">14,5</div>
<div class="t" style="left:737.0px;top:150.6px;color:#222;font-weight:normal">VE 00124550</div>
<div class="t" style="left:10.0px;top:186.6px;color:#222;font-weight:normal">251243</div>
<div class="t" style="left:252.0px;top:186.6px;color:#222;font-weight:normal">Ventilátor 04</div>
<div class="t" style="left:374.0px;top:186.6px;color:#222;font-weight:normal">1</div>
<div class="t" style="left:495.0px;top:186.6px;color:#222;font-weight:normal">-</div>
<div class="t" style="left:616.0px;top:186.6px;color:#222;font-weight:normal">12,80</div>
<div class="t" style="left:737.0px;top:186.6px;color:#222;font-weight:normal">VE 00124550</div>
<div class="t" style="left:10.0px;top:222.6px;color:#222;font-weight:normal">251244</div>
<div class="t" style="left:252.0px;top:222.6px;color:#222;font-weight:normal">Ventilátor 05</div>
<div class="t" style="left:374.0px;top:222.6px;color:#222;font-weight:normal">1</div>
<div class="t" style="left:495.0px;top:222.6px;color:#222;font-weight:normal">-</div>
<div class="t" style="left:616.0px;top:222.6px;color:#222;font-weight:normal">12,80</div>
<div class="t" style="left:737.0px;top:222.6px;color:#222;font-weight:normal">VE 00124550</div>
<div class="a" style="left:761px;top:31px;width:15px;height:203px;background:#fafafa"></div>
<svg class="a" style="left:763px;top:36px" width="10" height="8"><path d="M0.5 7.5 L5 1 L9.5 7.5Z" fill="#8a8a8a"/></svg>
<div class="a" style="left:764px;top:49px;width:9px;height:59px;background:#8a8a8a;border-radius:4.5px"></div>
<svg class="a" style="left:763px;top:223px" width="10" height="8"><path d="M0.5 0.5 L5 7 L9.5 0.5Z" fill="#8a8a8a"/></svg>
<div class="a" style="left:0px;top:234px;width:776px;height:16px;background:#fafafa"></div>
<svg class="a" style="left:4px;top:237px" width="8" height="10"><path d="M7.5 0.5V9.5L1 5Z" fill="#8a8a8a"/></svg>
<div class="a" style="left:18px;top:238px;width:284px;height:9px;background:#8a8a8a;border-radius:4.5px"></div>
<svg class="a" style="left:751px;top:237px" width="8" height="10"><path d="M0.5 0.5V9.5L7 5Z" fill="#8a8a8a"/></svg>
</div>
<div class="a" style="left:323px;top:364px;width:122px;height:31px;border:1px solid #c9d2da;border-top:none"></div>
<div class="a" style="left:315px;top:359px;width:138px;height:40px;border:4px solid #f00;z-index:50"></div>
<div class="a" style="left:189px;top:663px;width:802px;height:1px;background:#dedede"></div>
<div class="a" style="left:866px;top:674px;width:111px;height:44px;background:#eeeeee;border:1px solid #777;border-radius:3px"></div>
<div class="t" style="left:878px;top:684.5px;font-size:19.5px;color:#111;font-weight:normal;">Ďalej</div>
<svg class="a" style="left:931px;top:680px" width="32" height="32" viewBox="0 0 32 32"><circle cx="16" cy="16" r="14.6" fill="#8cb6ea" stroke="#5d8fd2" stroke-width="0.9"/><path d="M6 14.8 H21 V11 L26.5 16 L21 21 V17.2 H6Z" fill="#fff"/></svg>
<div class="a" style="left:860px;top:669px;width:123px;height:54px;border:4px solid #f00;z-index:50"></div>
<div class="a" style="left:324px;top:394px;width:168px;height:439px;background:#fff;border-left:1px solid #c8c8c8;box-shadow:3px 3px 8px rgba(0,0,0,.3)"></div>
<div class="t" style="left:342.5px;top:406.4px;font-size:12px;color:#222;font-weight:normal;">Názov</div>
<div class="a" style="left:325px;top:429px;width:151px;height:1px;background:#c9d9ea"></div>
<div class="t" style="left:342.5px;top:439.5px;font-size:12px;color:#222;font-weight:normal;">Cena</div>
<div class="t" style="left:342.5px;top:465.5px;font-size:12px;color:#222;font-weight:normal;">Číslo</div>
<div class="t" style="left:342.5px;top:491.5px;font-size:12px;color:#222;font-weight:normal;">Číslo faktúry</div>
<div class="t" style="left:342.5px;top:517.5px;font-size:12px;color:#222;font-weight:normal;">Dátum nadobudnutia</div>
<div class="t" style="left:342.5px;top:543.5px;font-size:12px;color:#222;font-weight:normal;">Dátum vyradenia</div>
<div class="t" style="left:342.5px;top:569.5px;font-size:12px;color:#222;font-weight:normal;">Dôvod vyradenia</div>
<div class="t" style="left:342.5px;top:597.5px;font-size:12px;color:#222;font-weight:normal;">Inventár</div>
<div class="t" style="left:342.5px;top:623.5px;font-size:12px;color:#222;font-weight:normal;">Počet</div>
<div class="t" style="left:342.5px;top:649.5px;font-size:12px;color:#222;font-weight:normal;">Poznámka</div>
<div class="t" style="left:342.5px;top:675.5px;font-size:12px;color:#222;font-weight:normal;">Spôsob likvidácie</div>
<div class="t" style="left:342.5px;top:701.5px;font-size:12px;color:#222;font-weight:normal;">Spôsob nadobudnutia</div>
<div class="t" style="left:342.5px;top:727.5px;font-size:12px;color:#222;font-weight:normal;">Učebňa</div>
<div class="t" style="left:342.5px;top:753.5px;font-size:12px;color:#222;font-weight:normal;">Účet</div>
<div class="t" style="left:342.5px;top:779.5px;font-size:12px;color:#222;font-weight:normal;">Výrobné číslo</div>
<div class="t" style="left:342.5px;top:805.5px;font-size:12px;color:#222;font-weight:normal;">Zodpovedná osoba</div>
<svg class="a" style="left:329px;top:598px" width="10" height="11" viewBox="0 0 10 11"><path d="M0.8 6.2 L3.6 10 L9.3 0.8" stroke="#222" stroke-width="1.3" fill="none"/></svg>
<div class="a" style="left:476px;top:400px;width:15px;height:430px;background:#fafafa"></div>
<svg class="a" style="left:479px;top:405px" width="10" height="7"><path d="M0.5 6.5 L5 0.5 L9.5 6.5Z" fill="#8a8a8a"/></svg>
<div class="a" style="left:479px;top:446px;width:9px;height:364px;background:#8a8a8a;border-radius:4.5px"></div>
<svg class="a" style="left:479px;top:817px" width="10" height="7"><path d="M0.5 0.5 L5 6.5 L9.5 0.5Z" fill="#8a8a8a"/></svg>
</body></html>
